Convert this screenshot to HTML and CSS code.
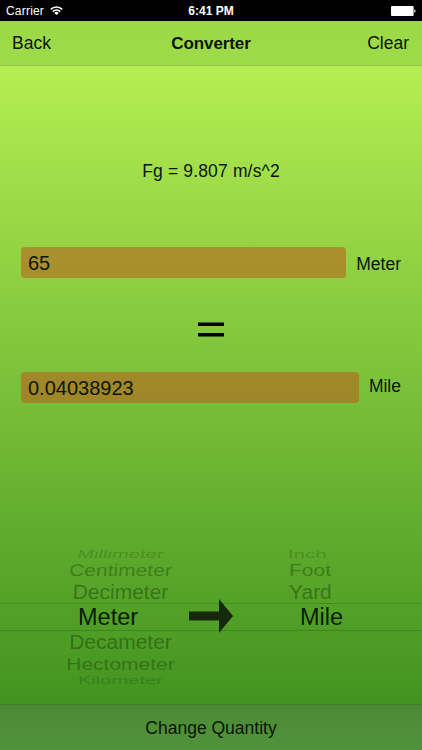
FILE: index.html
```html
<!DOCTYPE html>
<html lang="en">
<head>
  <meta charset="UTF-8">
  <meta name="viewport" content="width=device-width, initial-scale=1">
  <title>Converter</title>
  <link rel="stylesheet" href="styles.css">
</head>
<body>

<div class="status-bar">
  <div class="carrier">
    <span>Carrier</span>
    <svg class="wifi" viewBox="0 0 13 9" width="13" height="9">
      <path d="M.8 3.4a8 8 0 0 1 11.4 0M2.8 5.6a5.2 5.2 0 0 1 7.4 0" fill="none" stroke="#fff" stroke-width="1.6"/>
      <path d="M6.5 9L4.3 7a3 3 0 0 1 4.4 0z" fill="#fff"/>
    </svg>
  </div>
  <span class="time">6:41 PM</span>
  <svg class="battery" viewBox="0 0 25 10" width="25" height="10">
    <rect width="22.6" height="10" rx="1" fill="#fff"/>
    <path d="M23.3 3.3q1.3.4 1.3 1.7t-1.3 1.7z" fill="#fff"/>
  </svg>
</div>

<header class="nav-bar">
  <span class="nav-left">Back</span>
  <h1>Converter</h1>
  <span class="nav-right">Clear</span>
</header>

<main>
  <p class="formula">Fg = 9.807 m/s^2</p>

  <div class="field-row from">
    <div class="field">65</div>
    <label>Meter</label>
  </div>

  <svg class="equals" viewBox="0 0 26 15" width="26" height="15">
    <path d="M0 2.25h26M0 12.75h26" stroke="#000" stroke-width="3.7"/>
  </svg>

  <div class="field-row to">
    <div class="field">0.04038923</div>
    <label>Mile</label>
  </div>

  <div class="picker">
    <ul class="wheel wheel-from">
      <li class="up3">Millimeter</li>
      <li class="up2">Centimeter</li>
      <li class="up1">Decimeter</li>
      <li class="selected">Meter</li>
      <li class="down1">Decameter</li>
      <li class="down2">Hectometer</li>
      <li class="down3">Kilometer</li>
    </ul>
    <svg class="arrow" viewBox="0 0 44 34" width="44" height="34">
      <path d="M0 12.5h30V0l14 17-14 17V21.5H0z" fill="#16290c"/>
    </svg>
    <ul class="wheel wheel-to">
      <li class="up3">Inch</li>
      <li class="up2">Foot</li>
      <li class="up1">Yard</li>
      <li class="selected">Mile</li>
    </ul>
  </div>
</main>

<footer class="toolbar">Change Quantity</footer>

</body>
</html>
```

FILE: styles.css
```css
* {
  box-sizing: border-box;
}
body {
  margin: 0;
  height: 750px;
  display: flex;
  flex-direction: column;
  overflow: hidden;
  font-family: "Liberation Sans", Arial, sans-serif;
  font-size: 17.5px;
  color: #0b1505;
  background: #000;
}
.status-bar {
  height: 21px;
  display: grid;
  grid-template-columns: 1fr auto 1fr;
  align-items: center;
  padding: 1px 6px 0 6px;
  font-size: 12px;
  color: #fff;
}
.carrier {
  display: flex;
  align-items: center;
  gap: 6px;
  letter-spacing: 0.2px;
}
.wifi {
  margin-top: -2px;
}
.time {
  font-weight: bold;
}
.battery {
  justify-self: end;
}
.nav-bar {
  height: 45px;
  display: grid;
  grid-template-columns: 1fr auto 1fr;
  align-items: center;
  padding: 1px 13px 0 12px;
  background: linear-gradient(#9bd947, #9edb49);
  border-bottom: 1px solid #8bc442;
}
.nav-bar h1 {
  margin: 0;
  padding-left: 1px;
  font-size: 17px;
  letter-spacing: -0.1px;
}
.nav-right {
  text-align: right;
}
main {
  height: 638px;
  display: flex;
  flex-direction: column;
  background: linear-gradient(#b4ee52, #429320);
}
.formula {
  margin: 95px 0 0;
  line-height: 20px;
  letter-spacing: 0.15px;
  text-align: center;
}
.field-row {
  display: flex;
  align-items: center;
  gap: 10px;
  padding: 0 21px;
}
.from {
  margin-top: 66px;
}
.from label {
  padding-top: 3px;
}
.to {
  margin-top: 35px;
}
.to label {
  margin-top: -2px;
}
.field {
  flex: 1;
  height: 31px;
  padding-left: 7px;
  border-radius: 4px;
  background: rgba(185, 98, 32, 0.6);
  font-size: 20px;
  line-height: 32px;
}
.equals {
  align-self: center;
  margin-top: 44px;
}
.picker {
  height: 140px;
  margin-top: 143px;
  display: grid;
  grid-template-columns: 168px 86px 168px;
  /* selection lines above and below the middle row */
  background:
    linear-gradient(#438a22, #438a22) 0 57px / 100% 1px no-repeat,
    linear-gradient(#3f8420, #3f8420) 0 84px / 100% 1px no-repeat;
}
.wheel {
  list-style: none;
  margin: 0;
  padding: 0;
  font-size: 21px;
  white-space: nowrap;
  color: rgba(10, 40, 0, 0.4);
}
.wheel li {
  display: flex;
  align-items: center;
}
.wheel-from li {
  justify-content: center;
}
.wheel-from {
  padding-left: 73px;
}
.wheel-to {
  padding-left: 35px;
}
.arrow {
  align-self: start;
  justify-self: center;
  margin-top: 53px;
}
.wheel .selected {
  height: 27px;
  padding-top: 2px;
  font-size: 23.5px;
  color: #0c1c05;
}
.wheel-from .selected {
  justify-content: flex-start;
  padding-left: 5px;
}
.wheel-to .selected {
  padding-left: 11px;
}
/* rows get flatter and fainter towards the ends of the wheel */
.up1, .down1 {
  height: 23px;
}
.up2, .down2 {
  height: 20px;
  opacity: 0.85;
}
.up3, .down3 {
  height: 14px;
  opacity: 0.5;
}
.up1 {
  transform: scaleY(0.98);
}
.up2 {
  transform: scaleY(0.8);
}
.up3 {
  transform: translateY(1px) scale(0.96, 0.55);
}
.down1 {
  transform: scaleY(0.98);
}
.down2 {
  transform: translateY(1px) scaleY(0.8);
}
.down3 {
  transform: scale(0.96, 0.55);
}
.wheel-from .up1 {
  transform: scaleY(0.98) skewX(-2deg);
}
.wheel-from .up2 {
  transform: scaleY(0.8) skewX(-4deg);
}
.wheel-from .up3 {
  transform: translateY(1px) scale(0.96, 0.55) skewX(-8deg);
}
.wheel-to .up3 {
  transform: translate(-3px, 1px) scale(0.97, 0.55);
}
.toolbar {
  height: 46px;
  border-top: 1px solid #417f2a;
  background: linear-gradient(#4c8b36, #50923a);
  line-height: 46px;
  text-align: center;
}
```
